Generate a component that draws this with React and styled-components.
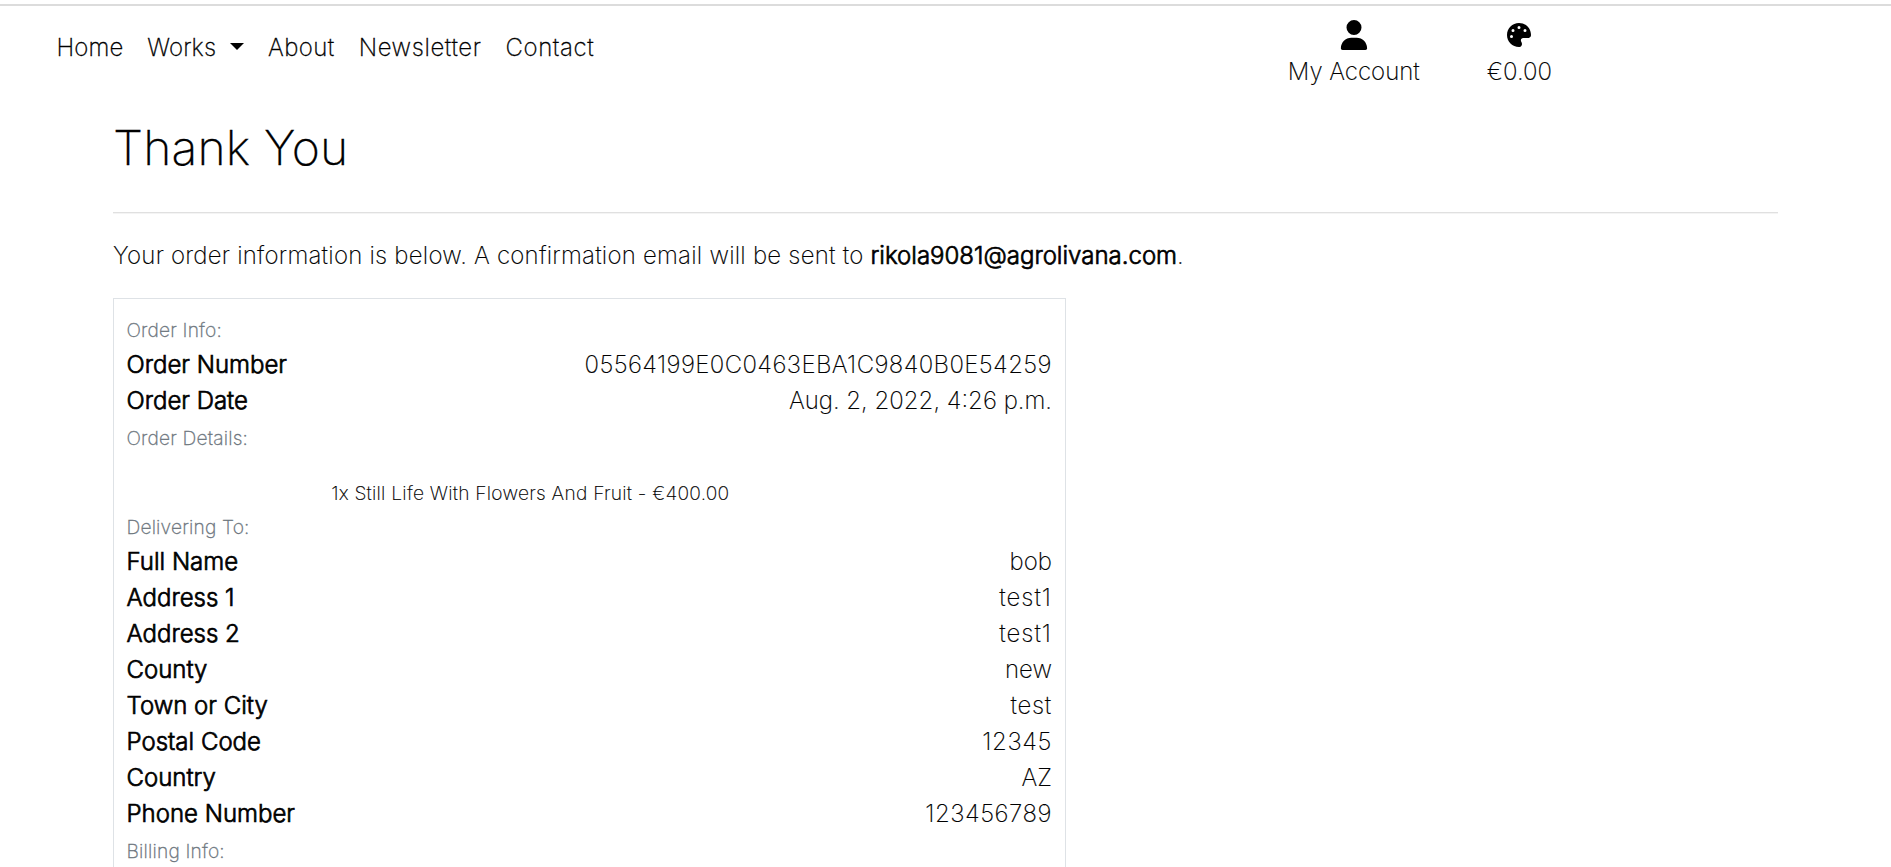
import React from "react";
import styled, { createGlobalStyle } from "styled-components";
import { FaUser, FaPalette } from "react-icons/fa6";

const Global = createGlobalStyle`
  *{box-sizing:border-box}
  html{overflow:hidden}
  body{margin:0;background:#fff;color:#000;font:200 24px/36px Inter,"Liberation Sans",sans-serif;height:867px;overflow:hidden;-webkit-text-stroke:.15px currentColor}
`;
const Header = styled.header`
  height:102px;border-top:2px solid #dcdcdc;margin-top:4px;display:flex;justify-content:space-between;padding:0 339px 0 56.5px;
`;
const Nav = styled.nav`display:flex;gap:24px;padding-top:24px;-webkit-text-stroke:.3px #000;`;
const NavLink = styled.span`display:flex;align-items:center;height:36px;white-space:nowrap;letter-spacing:${p => p.$track || 0}px;`;
const Caret = styled.i`border:7.2px solid transparent;border-top-color:#000;border-bottom:0;margin:-3px 0 0 14px;`;
const Actions = styled.div`display:flex;gap:67px;padding-top:11px;`;
const Action = styled.div`display:flex;flex-direction:column;align-items:center;`;
const IconBox = styled.span`height:36px;display:flex;align-items:center;font-size:${p => p.$size}px;-webkit-text-stroke:0;`;
const Label = styled.span`padding-top:1px;`;
const Main = styled.main`margin:0 113px;`;
const Title = styled.h2`font-size:48px;line-height:58px;font-weight:200;margin:13px 0 35px;letter-spacing:.15px;-webkit-text-stroke:.3px #000;`;
const Rule = styled.hr`border:0;border-top:1px solid #e0e0e0;border-bottom:1px solid #f4f4f4;margin:0 0 24px;`;
const Intro = styled.p`margin:0 0 24px;letter-spacing:.22px;`;
const Strong = styled.strong`font-weight:300;letter-spacing:0;-webkit-text-stroke:.7px #000;`;
const Card = styled.section`width:953px;border:1px solid #dee2e6;padding:12px 13px 12px 12.5px;`;
const Caption = styled.div`font-size:19.2px;height:36px;line-height:38px;color:#6c757d;letter-spacing:.17px;-webkit-text-stroke:.3px #6c757d;`;
const Row = styled.div`display:flex;justify-content:space-between;height:36px;`;
const Value = styled.span`letter-spacing:${p => p.$track || 0}px;`;
const Item = styled.p`font-size:19.2px;height:33px;margin:20px 0 0;padding-right:118px;text-align:center;letter-spacing:.24px;`;

const fields = [["Full Name","bob"],["Address 1","test1",1],["Address 2","test1",1],["County","new"],["Town or City","test",.7],["Postal Code","12345",.6],["Country","AZ"],["Phone Number","123456789",.5]];
const Field = ({ label, value, track }) => <Row><Strong>{label}</Strong><Value $track={track}>{value}</Value></Row>;

export default function App() {
  return <><Global />
    <Header>
      <Nav><NavLink $track={.1}>Home</NavLink><NavLink $track={.1}>Works<Caret /></NavLink><NavLink $track={.4}>About</NavLink><NavLink $track={.6}>Newsletter</NavLink><NavLink $track={.6}>Contact</NavLink></Nav>
      <Actions>
        <Action><IconBox $size={30}><FaUser /></IconBox><Label>My Account</Label></Action>
        <Action><IconBox $size={24}><FaPalette /></IconBox><Label>€0.00</Label></Action>
      </Actions>
    </Header>
    <Main>
      <Title>Thank You</Title><Rule />
      <Intro>Your order information is below. A confirmation email will be sent to <Strong>rikola9081@agrolivana.com</Strong>.</Intro>
      <Card>
        <Caption>Order Info:</Caption>
        <Field label="Order Number" value="05564199E0C0463EBA1C9840B0E54259" track={.38} />
        <Field label="Order Date" value="Aug. 2, 2022, 4:26 p.m." />
        <Caption>Order Details:</Caption>
        <Item>1x Still Life With Flowers And Fruit - €400.00</Item>
        <Caption>Delivering To:</Caption>
        {fields.map(([l, v, t]) => <Field key={l} label={l} value={v} track={t} />)}
        <Caption>Billing Info:</Caption>
      </Card>
    </Main></>;
}
